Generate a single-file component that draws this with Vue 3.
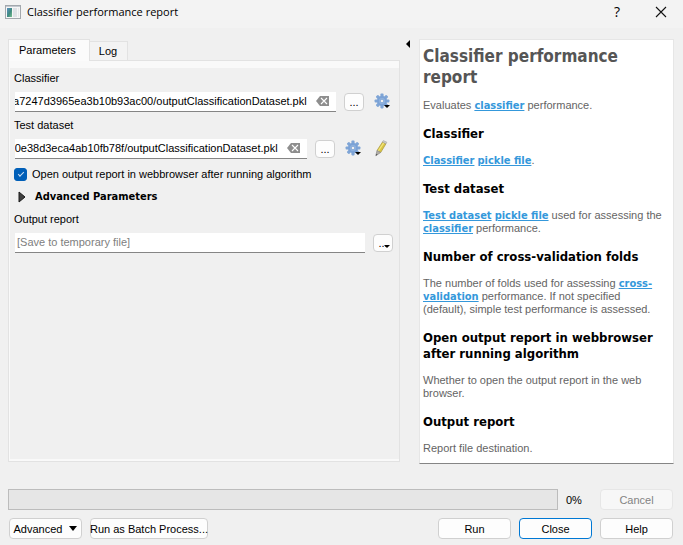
<script setup>
import { ref, onMounted } from 'vue'

const tabs = ['Parameters', 'Log']
const active = ref('Parameters')
const classifier = ref('8a7247d3965ea3b10b93ac00/outputClassificationDataset.pkl')
const dataset = ref('-0e38d3eca4ab10fb78f/outputClassificationDataset.pkl')
const output = ref('')
const openReport = ref(true)
const classifierBox = ref(null)
const datasetBox = ref(null)

// Long paths show their end, as after typing in them.
function showEnd() {
  for (const box of [classifierBox.value, datasetBox.value]) {
    if (box) box.scrollLeft = box.scrollWidth
  }
}
onMounted(() => {
  showEnd()
  document.fonts.ready.then(showEnd)
})

// Gear outline: eight teeth around the hub.
const teeth = [0, 45, 90, 135, 180, 225, 270, 315]
</script>

<template>
  <div class="dialog">
    <header class="titlebar">
      <svg class="app-icon" width="16" height="14" viewBox="0 0 16 14" aria-hidden="true">
        <defs>
          <linearGradient id="pic" x1="0" y1="0" x2="1" y2="1">
            <stop offset="0" stop-color="#5b8fc0" />
            <stop offset="0.55" stop-color="#3f8a80" />
            <stop offset="1" stop-color="#7cc08f" />
          </linearGradient>
        </defs>
        <rect x="0.5" y="0.5" width="15" height="13" fill="#f6f6f6" stroke="#a3a8ad" />
        <rect x="1" y="1" width="14" height="1" fill="#c3c9d0" />
        <rect x="2" y="3" width="5" height="9" fill="url(#pic)" />
        <rect x="8" y="3" width="4" height="9" fill="#dfe2e6" />
        <rect x="13" y="3" width="1" height="9" fill="#e6e8ea" />
      </svg>
      <h1 class="title">Classifier performance report</h1>
      <button class="sys" type="button" aria-label="What's this">?</button>
      <button class="sys" type="button" aria-label="Close window">
        <svg width="12" height="12" viewBox="0 0 12 12" aria-hidden="true">
          <path d="M1 1l10 10M11 1L1 11" fill="none" stroke="#111" stroke-width="1.1" />
        </svg>
      </button>
    </header>

    <main class="content">
      <section class="left">
        <div class="tabs" role="tablist">
          <button
            v-for="t in tabs"
            :key="t"
            class="tab"
            :class="{ active: active === t }"
            role="tab"
            type="button"
            :aria-selected="active === t"
            @click="active = t"
          >{{ t }}</button>
        </div>
        <div class="pane">
          <div v-show="active === 'Parameters'" class="form">
            <label class="label" for="classifier">Classifier</label>
            <div class="row">
              <div class="field">
                <input id="classifier" ref="classifierBox" v-model="classifier" type="text" />
                <button class="clear" type="button" aria-label="Clear classifier" @click="classifier = ''">
                  <svg width="13" height="10" viewBox="0 0 13 10" aria-hidden="true">
                    <path d="M4 0h9v10H4L0 5z" fill="#8e8e8e" />
                    <path d="M5 2l6 6M11 2L5 8" stroke="#fff" stroke-width="1.1" />
                  </svg>
                </button>
              </div>
              <button class="btn dots" type="button" aria-label="Browse classifier">...</button>
              <button class="tool" type="button" aria-label="Classifier options">
                <svg width="18" height="18" viewBox="0 0 18 18" aria-hidden="true">
                  <g fill="#7fa5d6">
                    <rect v-for="a in teeth" :key="a" x="6.4" y="0.6" width="3.2" height="4" rx="0.8" :transform="`rotate(${a} 8 8)`" />
                  </g>
                  <circle cx="8" cy="8" r="4" fill="#92b5e0" stroke="#7ba2d6" stroke-width="2" />
                  <circle cx="8" cy="8" r="1.8" fill="#f0f0f0" stroke="#6f98cf" stroke-width="0.7" />
                  <path d="M10 12h6l-3 3z" fill="#000" />
                </svg>
              </button>
            </div>

            <label class="label" for="dataset">Test dataset</label>
            <div class="row">
              <div class="field">
                <input id="dataset" ref="datasetBox" v-model="dataset" type="text" />
                <button class="clear" type="button" aria-label="Clear test dataset" @click="dataset = ''">
                  <svg width="13" height="10" viewBox="0 0 13 10" aria-hidden="true">
                    <path d="M4 0h9v10H4L0 5z" fill="#8e8e8e" />
                    <path d="M5 2l6 6M11 2L5 8" stroke="#fff" stroke-width="1.1" />
                  </svg>
                </button>
              </div>
              <button class="btn dots" type="button" aria-label="Browse test dataset">...</button>
              <button class="tool" type="button" aria-label="Test dataset options">
                <svg width="18" height="18" viewBox="0 0 18 18" aria-hidden="true">
                  <g fill="#7fa5d6">
                    <rect v-for="a in teeth" :key="a" x="6.4" y="0.6" width="3.2" height="4" rx="0.8" :transform="`rotate(${a} 8 8)`" />
                  </g>
                  <circle cx="8" cy="8" r="4" fill="#92b5e0" stroke="#7ba2d6" stroke-width="2" />
                  <circle cx="8" cy="8" r="1.8" fill="#f0f0f0" stroke="#6f98cf" stroke-width="0.7" />
                  <path d="M10 12h6l-3 3z" fill="#000" />
                </svg>
              </button>
              <button class="tool" type="button" aria-label="Edit test dataset">
                <svg width="18" height="18" viewBox="0 0 18 18" aria-hidden="true">
                  <path d="M3 10.500L8.500 2L12 3.700L6.700 12.500z" fill="#d9c545" stroke="#a8973e" stroke-width="0.7" />
                  <path d="M4.300 11L9.900 2.700" stroke="#f3e77c" stroke-width="1.2" />
                  <path d="M8.400 2L9.300 0.600L12.900 2.200L12 3.800z" fill="#cfcfca" stroke="#999" stroke-width="0.5" />
                  <path d="M3 10.500L6.700 12.500L1.800 15.700z" fill="#b0aca4" stroke="#8c8c8c" stroke-width="0.7" />
                  <path d="M1.800 15.700l0.400-2 1.500 1z" fill="#555" />
                </svg>
              </button>
            </div>

            <label class="check">
              <input v-model="openReport" type="checkbox" />
              <span>Open output report in webbrowser after running algorithm</span>
            </label>

            <button class="expander" type="button" aria-expanded="false">
              <svg width="8" height="12" viewBox="0 0 8 12" aria-hidden="true">
                <path d="M1 1l6 5-6 5z" fill="#404040" stroke="#1a1a1a" stroke-linejoin="round" />
              </svg>
              <span>Advanced Parameters</span>
            </button>

            <label class="label" for="output">Output report</label>
            <div class="row">
              <div class="field save">
                <input id="output" v-model="output" type="text" placeholder="[Save to temporary file]" />
              </div>
              <button class="btn dots menu" type="button" aria-label="Browse output report">
                <span>...</span>
                <svg class="arrow" width="6" height="3" viewBox="0 0 6 3" aria-hidden="true"><path d="M0 0h6L3 3z" /></svg>
              </button>
            </div>
          </div>
        </div>
      </section>

      <button class="collapse" type="button" aria-label="Hide help">
        <svg width="4" height="8" viewBox="0 0 4 8" aria-hidden="true"><path d="M4 0v8L0 4z" /></svg>
      </button>

      <article class="help">
        <h2>Classifier performance report</h2>
        <p>Evaluates <a href="#classifier">classifier</a> performance.</p>
        <h3>Classifier</h3>
        <p><a href="#classifier">Classifier</a> <a href="#pickle">pickle file</a>.</p>
        <h3>Test dataset</h3>
        <p><a href="#dataset">Test dataset</a> <a href="#pickle">pickle file</a> used for assessing the <a href="#classifier">classifier</a> performance.</p>
        <h3>Number of cross-validation folds</h3>
        <p>The number of folds used for assessing <a href="#cv">cross-validation</a> performance. If not specified (default), simple test performance is assessed.</p>
        <h3>Open output report in webbrowser after running algorithm</h3>
        <p>Whether to open the output report in the web browser.</p>
        <h3>Output report</h3>
        <p>Report file destination.</p>
      </article>
    </main>

    <footer class="footer">
      <div class="bar">
        <div class="progress" role="progressbar" aria-valuenow="0" aria-valuemin="0" aria-valuemax="100" aria-label="Progress"></div>
        <span class="percent">0%</span>
        <button class="btn wide" type="button" disabled>Cancel</button>
      </div>
      <div class="bar actions">
        <button class="btn advanced" type="button">
          <span>Advanced</span>
          <svg width="8" height="5" viewBox="0 0 8 5" aria-hidden="true"><path d="M0 0h8L4 5z" /></svg>
        </button>
        <button class="btn batch" type="button">Run as Batch Process...</button>
        <span class="spacer"></span>
        <button class="btn wide" type="button">Run</button>
        <button class="btn wide default" type="button">Close</button>
        <button class="btn wide" type="button">Help</button>
      </div>
    </footer>
  </div>
</template>

<style>
body {
  background: #f0f0f0;
}
</style>

<style scoped>
.dialog {
  display: flex;
  flex-direction: column;
  min-height: 100vh;
  box-sizing: border-box;
  background: #f0f0f0;
  color: #000;
  font: 11px/14px "Liberation Sans", Arial, sans-serif;
}
.dialog *,
.dialog *::before {
  box-sizing: border-box;
}
button,
input {
  font: inherit;
  color: inherit;
  margin: 0;
}
button {
  padding: 0;
  border: 0;
  background: none;
  white-space: nowrap;
}
svg {
  display: block;
  flex: none;
}

.titlebar {
  display: flex;
  align-items: center;
  height: 28px;
  padding: 0 0 4px 5px;
  background: #f3f3f3;
}
.title {
  flex: 1;
  margin: 0 0 0 6px;
  font: 11px/16px "Open Sans", sans-serif;
}
.sys {
  display: flex;
  align-items: center;
  justify-content: center;
  width: 44px;
  height: 24px;
  font: 14px/16px "Open Sans", sans-serif;
}

.content {
  flex: 1;
  display: grid;
  grid-template-columns: minmax(0, 392fr) 19px minmax(0, 255fr);
  padding: 11px 9px 0 8px;
}
.left {
  display: flex;
  flex-direction: column;
  margin-bottom: 2px;
}
.tabs {
  display: flex;
  align-items: flex-end;
  height: 21px;
}
.tab {
  height: 19px;
  padding: 0 10px 0 9px;
  border: 1px solid #e2e2e2;
  border-left: 0;
  border-bottom: 0;
  background: #f3f3f3;
}
.tab.active {
  height: 22px;
  margin-bottom: -1px;
  padding: 0 13px 1px 10px;
  border-left: 1px solid #e2e2e2;
  background: #fbfbfb;
  z-index: 1;
}
.pane {
  flex: 1;
  border: 1px solid #e2e2e2;
  background: #f9f9f9;
  padding: 7px 0 2px 1px;
}
.form {
  height: 100%;
  padding: 2px 6px 0 4px;
  background: #f0f0f0;
}
.label {
  display: block;
  height: 16px;
  line-height: 16px;
}
.row {
  display: flex;
  align-items: center;
  height: 21px;
  margin: 5px 0;
}
.field {
  flex: 1;
  min-width: 0;
  display: flex;
  align-items: center;
  height: 20px;
  margin-left: 1px;
  padding-right: 7px;
  border-bottom: 1px solid #858585;
  background: #fff;
}
.field input {
  flex: 1;
  min-width: 0;
  height: 18px;
  padding: 0;
  border: 0;
  outline: 0;
  background: none;
}
.field.save input {
  padding-left: 2px;
}
.field input::placeholder {
  color: #808080;
  opacity: 1;
}
.clear {
  margin-left: 9px;
}
.btn {
  display: flex;
  align-items: center;
  justify-content: center;
  border: 1px solid #d0d0d0;
  border-radius: 4px;
  background: #fdfdfd;
}
.dots {
  position: relative;
  width: 20px;
  height: 18px;
  margin-left: 8px;
}
.arrow {
  position: absolute;
  right: 2px;
  bottom: 3px;
}
.tool {
  width: 19px;
  height: 18px;
  margin-left: 10px;
}

.check {
  display: flex;
  align-items: center;
  gap: 5px;
  height: 16px;
  margin-top: 7px;
}
.check input {
  appearance: none;
  width: 13px;
  height: 13px;
  border-radius: 3px;
  background: #fff;
  border: 1px solid #868686;
}
.check input:checked {
  border-color: #005fb8;
  background: #005fb8;
  display: flex;
  align-items: center;
  justify-content: center;
}
.check input:checked::before {
  content: "";
  width: 6px;
  height: 3px;
  margin-bottom: 2px;
  border: solid #cfe2f5;
  border-width: 0 0 1px 1px;
  transform: rotate(-45deg);
}
.expander {
  display: flex;
  align-items: center;
  gap: 9px;
  height: 16px;
  margin: 7px 0 6px 4px;
  font: bold 11px/16px "DejaVu Sans Condensed", sans-serif;
}

.collapse {
  width: 19px;
  height: 10px;
  padding-left: 6px;
}
.help {
  padding: 6px 8px 8px 3px;
  border: 1px solid #e6e6e6;
  border-bottom-color: #858585;
  background: #fff;
  color: #646464;
  line-height: 13px;
}
.help h2,
.help h3,
.help a {
  font-family: "DejaVu Sans Condensed", sans-serif;
  font-weight: bold;
}
.help h2 {
  margin: 0 0 11px;
  color: #555;
  font-size: 17px;
  line-height: 21px;
}
.help h3 {
  margin: 14px 0 12px;
  color: #000;
  font-size: 13px;
  line-height: 16px;
}
.help p {
  margin: 0;
}
.help a {
  color: #3498db;
  line-height: 12px;
}

.footer {
  padding: 25px 10px 7px 8px;
}
.bar {
  display: flex;
  align-items: center;
  gap: 8px;
}
.progress {
  flex: 1;
  height: 21px;
  border: 1px solid #bcbcbc;
  background: #e6e6e6;
}
.percent {
  width: 26px;
}
.wide {
  width: 73px;
  height: 21px;
}
.btn:disabled {
  border-color: #e6e6e6;
  background: #f7f7f7;
  color: #838383;
}
.actions {
  margin-top: 8px;
  padding-left: 1px;
}
.advanced {
  gap: 7px;
  width: 73px;
  height: 21px;
}
.batch {
  width: 118px;
  height: 21px;
}
.spacer {
  flex: 1;
}
.default {
  border-color: #0078d4;
}
</style>
